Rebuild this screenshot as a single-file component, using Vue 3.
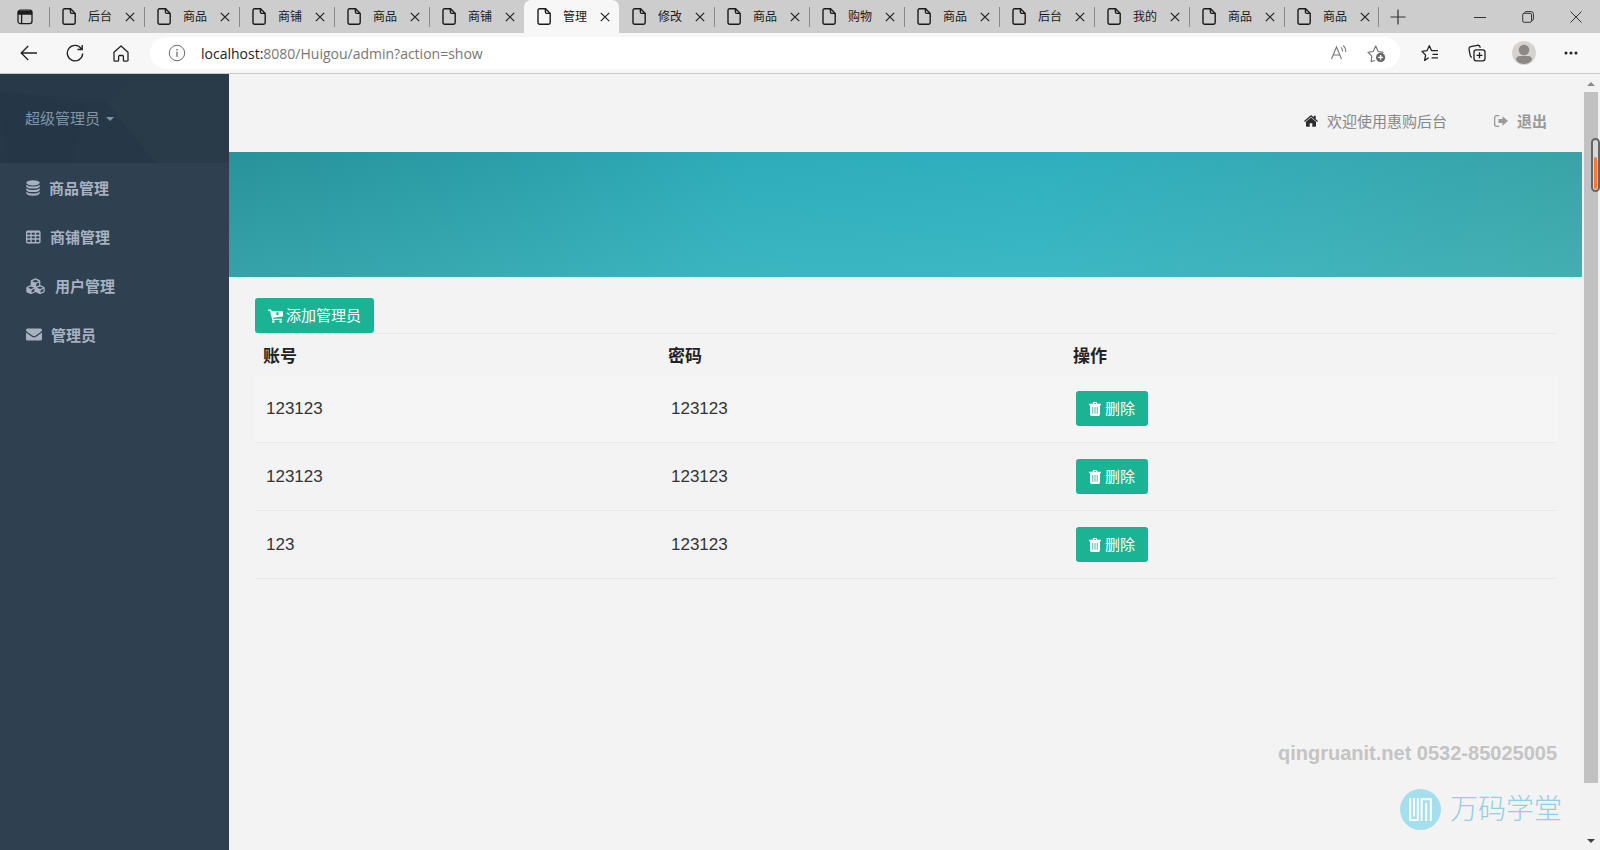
<script setup>
const tabs = ['后台', '商品', '商铺', '商品', '商铺', '管理', '修改', '商品', '购物', '商品', '后台', '我的', '商品', '商品']
const activeTab = 5

const menu = [
  { label: '商品管理', icon: 'database', width: 14, gap: 9 },
  { label: '商铺管理', icon: 'grid', width: 15, gap: 9 },
  { label: '用户管理', icon: 'cubes', width: 19, gap: 10 },
  { label: '管理员', icon: 'mail', width: 16, gap: 9 },
]

const admins = [
  { account: '123123', password: '123123' },
  { account: '123123', password: '123123' },
  { account: '123', password: '123123' },
]
</script>

<template>
  <div class="window">
    <header class="tabbar">
      <button class="tab-actions" aria-label="标签页操作">
        <svg width="16" height="16" viewBox="0 0 16 16" fill="none" stroke="#1c1c1c" stroke-width="1.3">
          <rect x="1" y="1.2" width="14" height="13.4" rx="2.4" />
          <path d="M1.5 2.6h13v2.4h-13z" fill="#1c1c1c" />
          <path d="M4.6 5v9.4" />
        </svg>
      </button>
      <nav class="tabs">
        <div v-for="(tab, i) in tabs" :key="i" class="tab" :class="{ active: i === activeTab, plain: i === activeTab + 1 }">
          <svg class="page-icon" width="14" height="17" viewBox="0 0 14 17" fill="none" stroke="#1a1a1a" stroke-width="1.4" stroke-linejoin="round">
            <path d="M2.6.8h6L13.2 5.400v9.200a1.600 1.600 0 0 1-1.600 1.600h-9A1.600 1.600 0 0 1 1 14.600V2.400A1.600 1.600 0 0 1 2.600.8z" />
            <path d="M8.400.8v3.200a1.400 1.400 0 0 0 1.400 1.400h3.400" />
          </svg>
          <a href="#" class="tab-title">{{ tab }}</a>
          <button class="tab-close" aria-label="关闭标签页">
            <svg width="10" height="10" viewBox="0 0 10 10" stroke="#222" stroke-width="1.2"><path d="M.8.8l8.400 8.400M9.200.8L.8 9.200" /></svg>
          </button>
        </div>
      </nav>
      <button class="new-tab" aria-label="新建标签页">
        <svg width="16" height="16" viewBox="0 0 16 16" stroke="#333" stroke-width="1.200"><path d="M8 .5v15M.5 8h15" /></svg>
      </button>
      <div class="win-controls">
        <button aria-label="最小化"><svg width="12" height="12" viewBox="0 0 12 12" stroke="#333"><path d="M0 6.500h12" /></svg></button>
        <button aria-label="还原">
          <svg width="12" height="12" viewBox="0 0 12 12" fill="none" stroke="#333"><rect x=".7" y="2.300" width="8.800" height="9" rx="1.500" /><path d="M2.700 2.200V1.600Q3 .6 4 .6h5.200q2.200 0 2.200 2.200v5.400q0 1-1.400 1.400" /></svg>
        </button>
        <button aria-label="关闭"><svg width="12" height="12" viewBox="0 0 12 12" stroke="#333"><path d="M.5.5l11 11M11.500.5l-11 11" /></svg></button>
      </div>
    </header>

    <div class="toolbar">
      <div class="nav-buttons">
        <button aria-label="后退"><svg width="18" height="16" viewBox="0 0 18 16" fill="none" stroke="#222" stroke-width="1.300"><path d="M8.200 1L1.200 8l7 7M1.200 8H17" /></svg></button>
        <button aria-label="刷新"><svg width="18" height="18" viewBox="0 0 18 18" fill="none" stroke="#222" stroke-width="1.400"><path d="M16.700 9.500A7.700 7.700 0 1 1 15.400 4.800M16.200 1v4.500h-4.700" /></svg></button>
        <button aria-label="主页"><svg width="16" height="17" viewBox="0 0 16 17" fill="none" stroke="#222" stroke-width="1.300" stroke-linejoin="round"><path d="M1 7.200L8 1l7 6.200v8a1 1 0 0 1-1 1h-2.600a1 1 0 0 1-1-1v-3.700q0-1-1-1H6.600q-1 0-1 1v3.700a1 1 0 0 1-1 1H2a1 1 0 0 1-1-1z" /></svg></button>
      </div>
      <div class="address">
        <svg width="18" height="18" viewBox="0 0 18 18" fill="none" stroke="#6a6a6a"><circle cx="9" cy="9" r="7.700" /><path d="M9 7.800v5" stroke-width="1.300" /><path d="M9 5v1.400" stroke-width="1.400" /></svg>
        <a href="#" class="url"><span class="host">localhost:</span>8080/Huigou/admin?action=show</a>
        <button aria-label="大声朗读">
          <svg width="18" height="18" viewBox="0 0 18 18" fill="none" stroke="#777" stroke-width="1.100"><path d="M1.500 15L6.500 3l5 12M3.200 11h6.600M11 3.400q1.600 1.600 1.600 4M13.300 1.500q2.600 2.500 2.500 6.500" /></svg>
        </button>
        <button class="star" aria-label="添加到收藏夹">
          <svg width="19" height="19" viewBox="0 0 19 19" fill="none" stroke="#777" stroke-width="1.200" stroke-linejoin="round"><path d="M8 16.500l-3.900 1 .7-5.300L1 8.400l5.200-.9L8.700 2l2.500 5.500 5.300.9" /><circle cx="13.600" cy="13.400" r="4.600" fill="#666" stroke="none" /><path d="M13.600 11v4.800M11.200 13.400H16" stroke="#fff" stroke-width="1.300" /></svg>
        </button>
      </div>
      <div class="tool-buttons">
        <button aria-label="收藏夹"><svg width="18" height="18" viewBox="0 0 18 18" fill="none" stroke="#222" stroke-width="1.300" stroke-linejoin="round"><path d="M7.600 13.700L3.600 16.400l1-5.300L1 7.300l5-.6L8.300 1.700l2.300 5H17M11.500 10.300H17M10.500 13.800H17" /></svg></button>
        <button aria-label="集锦"><svg width="18" height="18" viewBox="0 0 18 18" fill="none" stroke="#222" stroke-width="1.300"><rect x="6" y="5.800" width="11" height="11" rx="2.200" /><path d="M11.500 8.300v6M8.500 11.300h6M3.800 13.400Q2.500 12.800 2.200 11.300L1 5.200Q.8 3.200 2.700 2.700L9.300 1.300q2-.3 2.700 1.500l.3.900" /></svg></button>
        <button aria-label="个人资料"><svg width="24" height="24" viewBox="0 0 24 24"><circle cx="12" cy="12" r="12" fill="#d6d3d1" /><circle cx="12" cy="9" r="5.300" fill="#8b8886" /><path d="M4 19q0-4 4-4h8q4 0 4 4-3 4-8 4t-8-4z" fill="#8b8886" /></svg></button>
        <button aria-label="设置及其他"><svg width="14" height="4" viewBox="0 0 14 4" fill="#222"><circle cx="2" cy="2" r="1.500" /><circle cx="7" cy="2" r="1.500" /><circle cx="12" cy="2" r="1.500" /></svg></button>
      </div>
    </div>

    <div class="page">
      <aside class="sidebar">
        <div class="profile">
          <svg class="facets" viewBox="0 0 229 89" preserveAspectRatio="none">
            <path d="M0 0h229v89H155L107 28 0 18z" fill="#283a49" />
            <path d="M0 18l107 10 48 61H0z" fill="#263747" />
            <path d="M107 28L135 0h94v89h-74z" fill="#293b49" />
            <path d="M0 18l84 13-12 58H8z" fill="#253646" />
          </svg>
          <button class="profile-name">超级管理员<span class="caret"></span></button>
        </div>
        <nav>
          <a v-for="item in menu" :key="item.label" href="#" class="menu-item" :style="{ gap: item.gap + 'px' }">
            <svg v-if="item.icon === 'database'" :width="item.width" height="16" viewBox="0 0 14 16" fill="#a7b1c2">
              <ellipse cx="7" cy="2.800" rx="6.700" ry="2.600" />
              <path d="M.3 4.700q2 1.900 6.700 1.900t6.700-1.900v1.700q-1 2.200-6.700 2.200T.3 6.400z" />
              <path d="M.3 8.200q2 1.900 6.700 1.900t6.700-1.900v1.700q-1 2.200-6.700 2.200T.3 9.900z" />
              <path d="M.3 11.700q2 1.900 6.700 1.900t6.700-1.900v1.500q-1 2.500-6.700 2.500T.3 13.200z" />
            </svg>
            <svg v-else-if="item.icon === 'grid'" :width="item.width" height="14" viewBox="0 0 15 14" fill="none" stroke="#a7b1c2" stroke-width="1.400">
              <rect x=".7" y="1.200" width="13.200" height="11.600" rx="1" />
              <path d="M.7 2h13.200M.7 5.500h13.200M.7 9h13.200M5 1v12M9.500 1v12" />
            </svg>
            <svg v-else-if="item.icon === 'cubes'" :width="item.width" height="16" viewBox="0 0 19 16" fill="#a7b1c2">
              <path d="M9.500.3l4.200 1.800q.6.300.6 1v4l3.600 1.600q.8.300.8 1.100v3.500q0 .7-.7 1.100l-3.500 1.500q-.5.200-1 0L9.500 14l-4 1.900q-.5.200-1 0L1 14.400q-.7-.4-.7-1.100V9.800q0-.8.8-1.100l3.600-1.600v-4q0-.7.6-1z" />
              <path d="M9.500 1.800L6.200 3.200l3.300 1.400 3.300-1.400zM10.200 5.800v2.700l2.900-1.300V4.500zM5 8.400L1.900 9.700 5 11l3.100-1.300zM5.600 12.200v2.500l2.900-1.400v-2.500zM14 8.400l-3.100 1.300L14 11l3.100-1.300zM14.600 12.200v2.500l2.900-1.400v-2.500z" fill="#2f4050" />
            </svg>
            <svg v-else :width="item.width" height="13" viewBox="0 0 16 13" fill="#a7b1c2">
              <path d="M1.500.5h13Q16 .5 16 2q0 1-1.300 2L9.400 7.700Q8 8.600 6.600 7.700L1.300 4Q0 3 0 2 0 .5 1.500.5z" />
              <path d="M0 4.600l5.900 4.100q2.100 1.300 4.200 0L16 4.600v6.400q0 1.500-1.500 1.500h-13Q0 12.500 0 11z" />
            </svg>
            <span>{{ item.label }}</span>
          </a>
        </nav>
      </aside>

      <main class="content">
        <div class="topbar">
          <a href="#" class="welcome">
            <svg width="14" height="12" viewBox="0 0 14 12" fill="#2b2b2b"><path d="M7 2.600l5 4.200V11q0 .8-.8.8H8.300V8.300H5.700v3.500H2.800Q2 11.800 2 11V6.800z" /><path d="M7 0l2.800 2.300V.8h1.900v3.100L14 5.900l-.8 1L7 1.700.8 6.900l-.8-1z" /></svg>
            <span>欢迎使用惠购后台</span>
          </a>
          <a href="#" class="logout">
            <svg width="14" height="12" viewBox="0 0 14 12" fill="#999"><path d="M5.300 0H2.700Q0 0 0 2.700v6.600Q0 12 2.700 12h2.600v-1.300H2.700q-1.400 0-1.400-1.400V2.700q0-1.400 1.400-1.400h2.600z" /><path d="M4.500 4v4h4v2.700L14 6 8.500 1.300V4z" /></svg>
            <span>退出</span>
          </a>
        </div>
        <div class="banner"></div>
        <section class="panel">
          <button class="btn add">
            <svg width="15" height="14" viewBox="0 0 15 14" fill="#fff"><path fill-rule="evenodd" d="M0 .5h2.400q.8 0 1 1l.1.700H15v5.300L5 8.800l.2 1h8.600V11H4.300L2 1.800H0zM8.500 3.200v1.200H7.200l2.200 2.200 2.200-2.200h-1.300V3.200z" /><circle cx="5.300" cy="12.600" r="1.300" /><circle cx="12.700" cy="12.600" r="1.300" /></svg>
            <span>添加管理员</span>
          </button>
          <table class="admins">
            <thead>
              <tr><th>账号</th><th>密码</th><th>操作</th></tr>
            </thead>
            <tbody>
              <tr v-for="(row, i) in admins" :key="i">
                <td>{{ row.account }}</td>
                <td>{{ row.password }}</td>
                <td>
                  <button class="btn">
                    <svg width="12" height="14" viewBox="0 0 12 14" fill="#fff"><path fill-rule="evenodd" d="M3.500 1.800L4 .6Q4.200 0 5 0h2q.8 0 1 .6l.5 1.200H12v1.400h-1v9q0 1.800-1.500 1.800h-7Q1 14 1 12.200v-9H0V1.800zM4.800 1.800h2.400L7 1H5zM3.400 5v6.700h.8V5zM5.600 5v6.700h.8V5zM7.800 5v6.700h.8V5z" /></svg>
                    <span>删除</span>
                  </button>
                </td>
              </tr>
            </tbody>
          </table>
        </section>
      </main>

      <div class="scrollbar">
        <span class="arrow up"></span>
        <span class="thumb"></span>
        <span class="arrow down"></span>
        <span class="gauge"><span class="gauge-fill"></span></span>
      </div>

      <div class="watermark">
        <p class="contact">qingruanit.net 0532-85025005</p>
        <p class="brand">
          <svg width="41" height="41" viewBox="0 0 41 41"><circle cx="20.500" cy="20.500" r="20.500" fill="#a5deed" /><path d="M10.200 9v22h7.600V9M14 9v18.500M21.600 32V10.200h9.200V32M26.200 14v18" fill="none" stroke="#fff" stroke-width="2" /></svg>
          <span>万码学堂</span>
        </p>
      </div>
    </div>
  </div>
</template>

<style>
html, body, #app { height: 100%; }
body { margin: 0; }
</style>

<style scoped>
.window {
  display: flex;
  flex-direction: column;
  min-height: 100%;
  background: #f3f3f3;
  font-family: "Liberation Sans", "Noto Sans CJK SC", sans-serif;
  font-size: 15px;
  color: #333;
}
button {
  display: inline-flex;
  align-items: center;
  justify-content: center;
  padding: 0;
  border: 0;
  background: none;
  font: inherit;
  color: inherit;
}
a { color: inherit; text-decoration: none; }
svg { display: block; flex: none; }
p { margin: 0; }

.tabbar {
  display: flex;
  height: 33px;
  background: #cdcdcd;
}
.tab-actions { width: 49px; }
.tabs { display: flex; }
.tab {
  display: flex;
  align-items: center;
  box-sizing: border-box;
  width: 95px;
  padding-left: 13px;
  background: linear-gradient(#8a8a8a, #8a8a8a) left center / 1px 20px no-repeat;
}
.tab:last-child {
  background:
    linear-gradient(#8a8a8a, #8a8a8a) left center / 1px 20px no-repeat,
    linear-gradient(#8a8a8a, #8a8a8a) right center / 1px 20px no-repeat;
}
.tab.plain { background: none; }
.tab.active { background: #f7f7f7; border-radius: 7px 7px 0 0; }
.tab-title {
  width: 28px;
  margin: 0 9px 0 12px;
  overflow: hidden;
  font-size: 12px;
  line-height: 18px;
  white-space: nowrap;
  color: #1a1a1a;
}
.new-tab { width: 38px; }
.win-controls { display: flex; margin-left: auto; }
.win-controls button { width: 48px; }

.toolbar {
  display: flex;
  align-items: center;
  box-sizing: border-box;
  height: 41px;
  border-bottom: 1px solid #c9c9c9;
  background: #f7f7f7;
}
.nav-buttons { display: flex; padding-left: 6px; }
.nav-buttons button { width: 46px; height: 32px; }
.address {
  display: flex;
  flex: 1;
  align-items: center;
  height: 32px;
  margin-left: 6px;
  padding: 0 14px 0 18px;
  border-radius: 16px;
  background: #fff;
}
.url {
  flex: 1;
  margin-left: 15px;
  font-family: "Open Sans", "Noto Sans", sans-serif;
  font-size: 14px;
  color: #767676;
}
.host { color: #222; }
.star { margin-left: 19px; }
.tool-buttons { display: flex; padding-left: 6px; padding-right: 6px; }
.tool-buttons button { width: 47px; height: 32px; }

.page {
  position: relative;
  display: flex;
  flex: 1;
}
.sidebar { width: 229px; background: #2f4050; }
.profile {
  position: relative;
  height: 89px;
  background: #293a49;
}
.facets {
  position: absolute;
  inset: 0;
  width: 100%;
  height: 100%;
}
.profile-name {
  position: relative;
  margin: 33px 0 0 25px;
  line-height: 24px;
  color: #8095a8;
}
.caret {
  margin-left: 6px;
  border: 4px solid transparent;
  border-top-color: #8095a8;
  border-bottom: 0;
}
.menu-item {
  display: flex;
  align-items: center;
  height: 49px;
  padding-left: 26px;
  font-weight: 700;
  color: #a7b1c2;
}

.content { flex: 1; min-width: 0; }
.topbar {
  display: flex;
  align-items: center;
  justify-content: flex-end;
  gap: 47px;
  height: 78px;
  padding-right: 35px;
  box-sizing: border-box;
  padding-top: 15px;
  color: #999;
}
.topbar a { display: flex; align-items: center; gap: 9px; }
.welcome { color: #888; }
.logout { font-weight: 700; }
.banner {
  height: 125px;
  background:
    linear-gradient(to bottom, rgba(110, 220, 220, 0), rgba(110, 220, 220, 0.2)),
    linear-gradient(100deg, #28929a 0%, #2b9ea8 20%, #2eacba 38%, #2fafbe 60%, #36a9b3 80%, #38a3a6 100%);
}
.panel { padding: 21px 25px 0 26px; }
.btn {
  gap: 3px;
  height: 35px;
  padding: 0 13px;
  border-radius: 3px;
  background: #1ab394;
  color: #fff;
}
.btn span { line-height: 20px; }
.add { display: flex; }
.admins {
  width: 100%;
  border-collapse: collapse;
  table-layout: fixed;
  border-top: 1px solid #e7e7e7;
  font-size: 17px;
}
th, td { text-align: left; }
th:nth-child(1), th:nth-child(2) { width: 389px; }
th {
  height: 41px;
  padding: 0 8px;
  color: #222;
}
td {
  height: 67px;
  padding: 0 11px;
  border-bottom: 1px solid #e9e9e9;
}
td .btn { gap: 4px; font-size: 15px; }
th:nth-child(1), th:nth-child(2) { width: 389px; }
tbody tr:first-child { background: #f5f5f5; }

.scrollbar {
  position: relative;
  display: flex;
  flex-direction: column;
  align-items: center;
  width: 18px;
  background: #f2f2f2;
}
.thumb { flex: 1; width: 14px; margin: 6px 0 56px; background: #c1c1c1; }
.arrow { border: 4px solid transparent; }
.up { margin-top: 8px; border-top: 0; border-bottom-color: #8a8a8a; }
.down { margin-bottom: 7px; border-bottom: 0; border-top-color: #444; }
.gauge {
  position: absolute;
  top: 64px;
  right: 0;
  display: flex;
  align-items: flex-end;
  box-sizing: border-box;
  width: 9px;
  height: 54px;
  padding: 1px;
  border: 2px solid #666;
  border-radius: 5px;
  background: #d8d8d8;
}
.gauge-fill { flex: 1; height: 32px; border-radius: 2px; background: #f47b30; }

.watermark {
  position: absolute;
  right: 38px;
  bottom: 20px;
  display: flex;
  flex-direction: column;
  align-items: flex-end;
  gap: 24px;
}
.contact {
  margin-right: 5px;
  font-size: 20px;
  font-weight: 700;
  line-height: 24px;
  color: #c4c4c4;
}
.brand {
  display: flex;
  align-items: center;
  gap: 9px;
  font-size: 28px;
  font-weight: 300;
  line-height: 40px;
  color: #93cfe0;
}
</style>
